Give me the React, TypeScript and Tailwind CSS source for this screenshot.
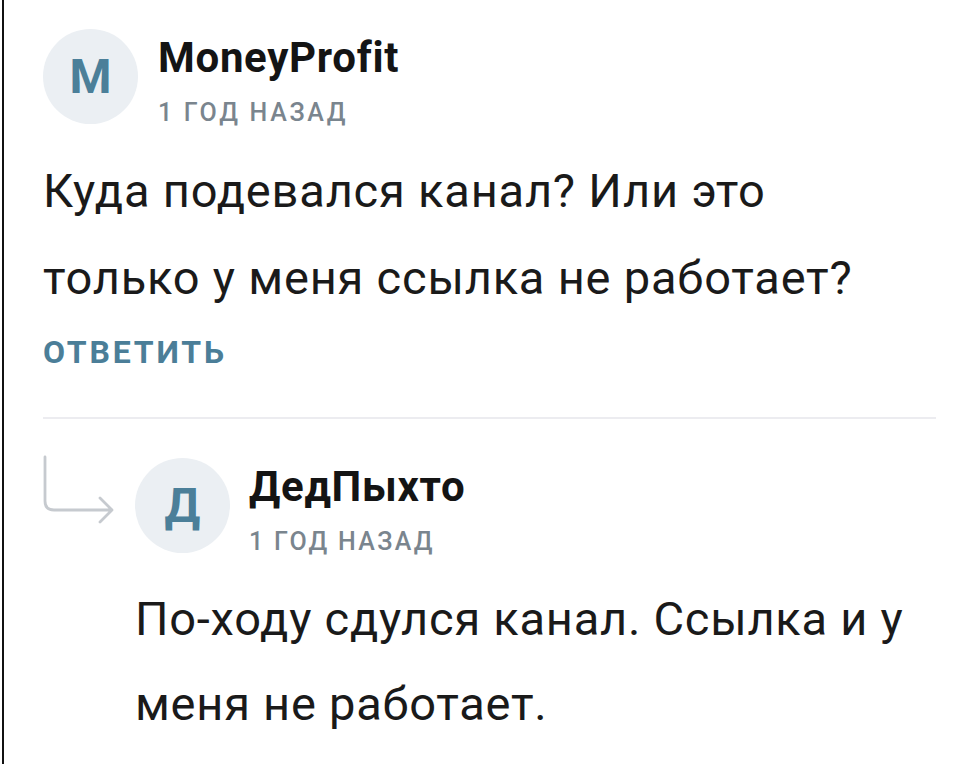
import React from "react";

function Avatar({ letter }: { letter: string }) {
  return (
    <div className="w-[95px] h-[95px] shrink-0 rounded-full bg-[#ebeff3] flex items-center justify-center">
      <span className="text-[48px] leading-none font-bold text-[#4b7f99]">{letter}</span>
    </div>
  );
}

function Header({ name, dateTrack }: { name: string; dateTrack: string }) {
  return (
    <div className="flex flex-col mt-[5px]">
      <div className="text-[42px] leading-[48px] font-bold tracking-[0.7px] text-[#141414]">{name}</div>
      <div className={`mt-[16px] text-[25px] leading-[30px] font-medium ${dateTrack} text-[#7a858e]`}>
        1 ГОД НАЗАД
      </div>
    </div>
  );
}

export default function App() {
  return (
    <div
      className="w-[978px] h-[767px] bg-white overflow-hidden pl-[2px]"
      style={{ fontFamily: "Roboto, 'Noto Sans', sans-serif" }}
    >
      <div className="h-[764px] border-l-2 border-[#111] pl-[39px] pr-[42px] pt-[29px]">
        {/* Comment 1 */}
        <div className="flex items-start gap-[20px]">
          <Avatar letter="М" />
          <Header name="MoneyProfit" dateTrack="tracking-[2.7px]" />
        </div>
        <p className="mt-[19px] text-[47px] leading-[87px] tracking-[0.8px] text-[#1a1a1a]">
          Куда подевался канал? Или это
          <br />
          только у меня ссылка не работает?
        </p>
        <div className="mt-[13px] text-[32px] leading-[36px] font-bold tracking-[2.8px] text-[#4b7e98]">
          ОТВЕТИТЬ
        </div>
        <div className="mt-[47px] h-[2px] bg-[#ececf0]" />

        {/* Reply */}
        <div className="mt-[36px] flex items-start">
          <svg width="95" height="75" viewBox="0 0 95 75" className="shrink-0 -ml-[3px]">
            <path
              d="M5 2 V46 Q5 55 14 55 H72 M60 43 L72 55 L60 67"
              fill="none"
              stroke="#c6cacf"
              strokeWidth="2.8"
              strokeLinecap="round"
              strokeLinejoin="round"
            />
          </svg>
          <div className="flex flex-col">
            <div className="flex items-start gap-[19px] mt-[3px]">
              <Avatar letter="Д" />
              <Header name="ДедПыхто" dateTrack="tracking-[2.3px]" />
            </div>
            <p className="mt-[19px] text-[47px] leading-[85px] tracking-[0.75px] text-[#1a1a1a]">
              По-ходу сдулся канал. Ссылка и у
              <br />
              меня не работает.
            </p>
          </div>
        </div>
      </div>
    </div>
  );
}
